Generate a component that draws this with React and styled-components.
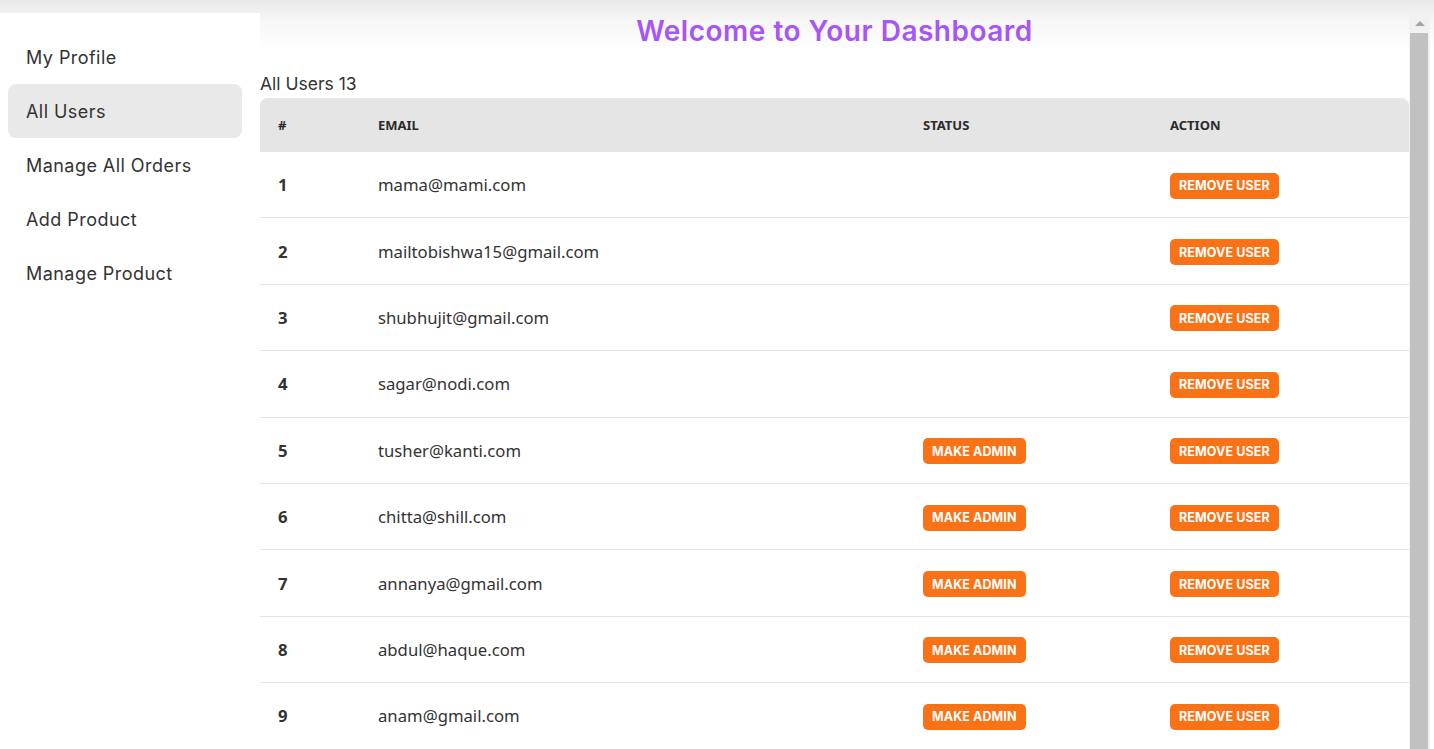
import React from "react";
import styled, { createGlobalStyle } from "styled-components";

const GlobalStyle = createGlobalStyle`
  html, body {
    margin: 0;
    padding: 0;
    height: 100%;
    overflow: hidden;
  }
  body {
    background: linear-gradient(to bottom, #e9e9e9 0px, #f7f7f7 22px, #ffffff 52px);
    font-family: "Inter", "Noto Sans", sans-serif;
    color: #2b2b2b;
  }
  * { box-sizing: border-box; }
`;

const TOTAL_USERS = 13;

// first page of the user list
const users = [
  { email: "mama@mami.com", admin: true },
  { email: "mailtobishwa15@gmail.com", admin: true },
  { email: "shubhujit@gmail.com", admin: true },
  { email: "sagar@nodi.com", admin: true },
  { email: "tusher@kanti.com" },
  { email: "chitta@shill.com" },
  { email: "annanya@gmail.com" },
  { email: "abdul@haque.com" },
  { email: "anam@gmail.com" },
];

const menu = ["My Profile", "All Users", "Manage All Orders", "Add Product", "Manage Product"];

const Layout = styled.div`
  display: flex;
  height: 100vh;
  padding-top: 13px;
`;

const Sidebar = styled.aside`
  width: 260px;
  flex-shrink: 0;
  background: #fff;
  padding: 17px 18px 16px 8px;
`;

const MenuList = styled.ul`
  list-style: none;
  margin: 0;
  padding: 0;
  display: flex;
  flex-direction: column;
`;

const MenuItem = styled.li`
  height: 54px;
  display: flex;
  align-items: center;
  padding-left: 18px;
  border-radius: 8px;
  font-size: 18px;
  letter-spacing: 0.45px;
  color: #333;
  background: ${(p) => (p.$active ? "#e9e9e9" : "transparent")};
  cursor: pointer;
`;

const Main = styled.main`
  flex: 1;
  min-width: 0;
  overflow: hidden;
`;

const ScrollRail = styled.div`
  width: 21px;
  flex-shrink: 0;
  margin-right: 4px;
  background: #f1f1f1;
  display: flex;
  flex-direction: column;
`;

const ScrollArrow = styled.div`
  height: 20px;
  display: flex;
  justify-content: center;
  align-items: center;

  &::before {
    content: "";
    border-left: 5px solid transparent;
    border-right: 5px solid transparent;
    border-bottom: 5px solid #a3a3a3;
  }
`;

const ScrollThumb = styled.div`
  flex: 1;
  margin: 0 2px 0 1px;
  background: #c1c1c1;
`;

const Title = styled.h1`
  margin: 0;
  text-align: center;
  font-size: 28px;
  line-height: 36px;
  font-weight: 600;
  letter-spacing: 0.5px;
  color: #a855f7;
`;

const Count = styled.div`
  margin-top: 21px;
  font-size: 17.5px;
  line-height: 28px;
  color: #333;
`;

const Table = styled.table`
  width: 100%;
  border-collapse: separate;
  border-spacing: 0;
  font-family: "Noto Sans", "Open Sans", sans-serif;
`;

const HeadCell = styled.th`
  height: 54px;
  padding: 0 18px;
  text-align: left;
  font-size: 13px;
  font-weight: 700;
  text-transform: uppercase;
  color: #2b2b2b;
  background: #e5e5e5;
  width: ${(p) => p.$w || "auto"};

  &:first-child { border-top-left-radius: 8px; }
  &:last-child { border-top-right-radius: 8px; }
`;

const Cell = styled.td`
  height: 66.4px;
  padding: 0 18px;
  border-bottom: 1px solid #e5e5e5;
  font-size: 16.7px;
  font-weight: ${(p) => (p.$bold ? 700 : 400)};
  color: #333;
`;

const ActionButton = styled.button`
  height: 26px;
  margin-top: 2px;
  padding: 0 9px;
  border: none;
  border-radius: 5px;
  background: #f97316;
  color: #fff;
  font-family: "Inter", sans-serif;
  font-size: 12.5px;
  font-weight: 700;
  letter-spacing: 0.1px;
  text-transform: uppercase;
  cursor: pointer;
`;

export default function App() {
  return (
    <>
      <GlobalStyle />
      <Layout>
        <Sidebar>
          <MenuList>
            {menu.map((m) => (
              <MenuItem key={m} $active={m === "All Users"}>
                {m}
              </MenuItem>
            ))}
          </MenuList>
        </Sidebar>
        <Main>
          <Title>Welcome to Your Dashboard</Title>
          <Count>All Users {TOTAL_USERS}</Count>
          <Table>
            <thead>
              <tr>
                <HeadCell $w="100px">#</HeadCell>
                <HeadCell $w="545px">Email</HeadCell>
                <HeadCell $w="247px">Status</HeadCell>
                <HeadCell>Action</HeadCell>
              </tr>
            </thead>
            <tbody>
              {users.map((u, i) => (
                <tr key={u.email}>
                  <Cell $bold>{i + 1}</Cell>
                  <Cell>{u.email}</Cell>
                  <Cell>{!u.admin && <ActionButton>Make Admin</ActionButton>}</Cell>
                  <Cell>
                    <ActionButton>Remove User</ActionButton>
                  </Cell>
                </tr>
              ))}
            </tbody>
          </Table>
        </Main>
        <ScrollRail>
          <ScrollArrow />
          <ScrollThumb />
        </ScrollRail>
      </Layout>
    </>
  );
}
